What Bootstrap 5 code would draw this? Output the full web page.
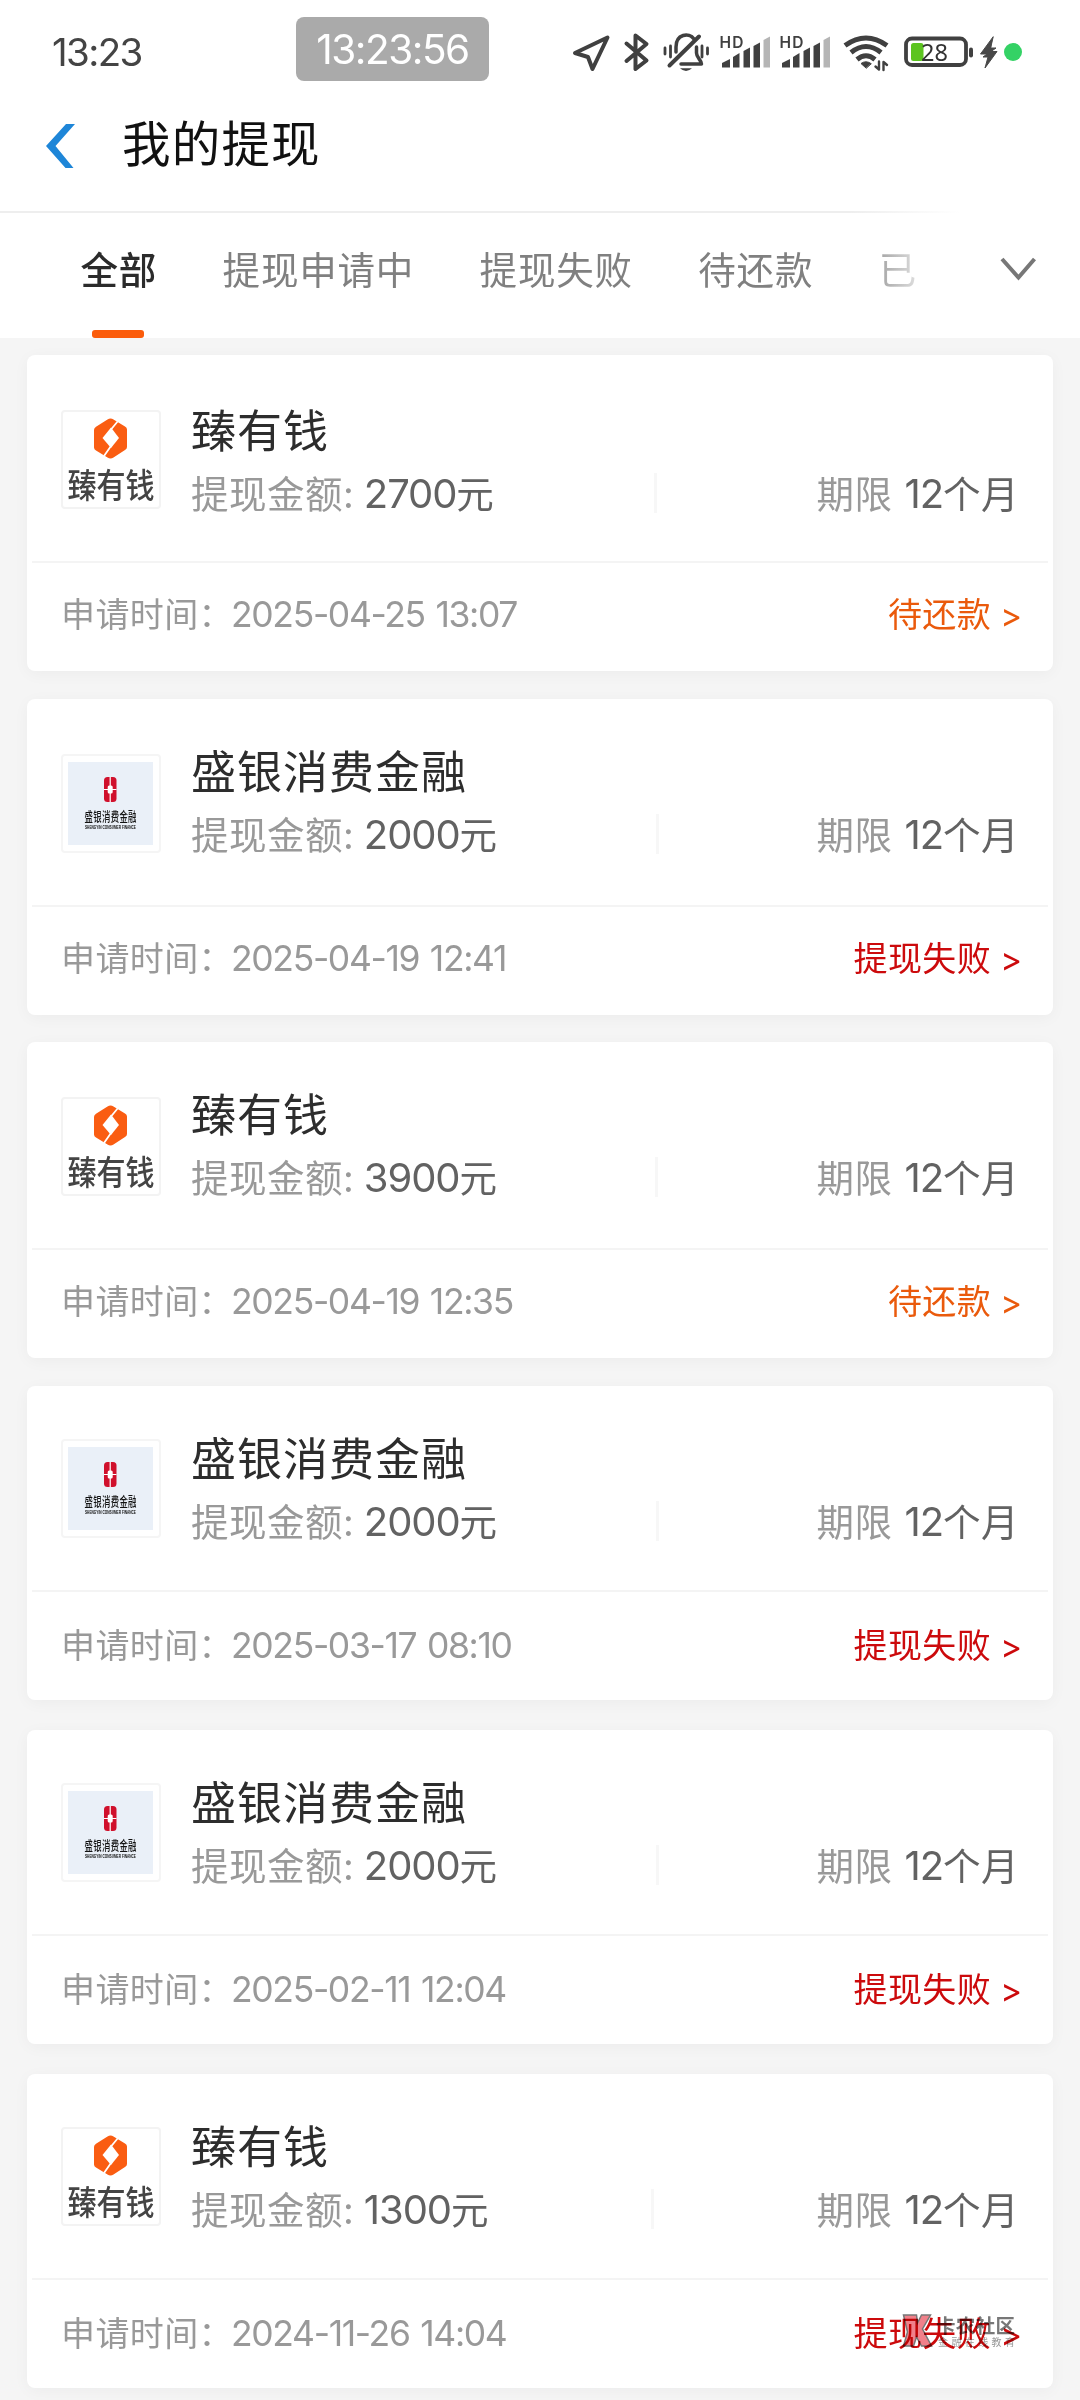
<!DOCTYPE html>
<html lang="zh-CN">
<head>
<meta charset="utf-8">
<meta name="viewport" content="width=device-width, initial-scale=1">
<title>我的提现</title>
<link href="https://cdn.jsdelivr.net/npm/bootstrap@5.3.0/dist/css/bootstrap.min.css" rel="stylesheet">
<style>
  body { font-family: Inter, "Noto Sans CJK SC", sans-serif; background: #f5f5f5; color: #333; }
  .app { width: 1080px; height: 2400px; overflow: hidden; }
  .statusbar { height: 98px; }
  .clock { font-size: 38.5px; line-height: 40px; letter-spacing: -1.6px; color: #444; padding: 32px 0 0 52px; }
  .timer { left: 296px; top: 17px; width: 193px; height: 64px; border-radius: 8px; background: #aaa; color: #fff; font-size: 40.5px; line-height: 65px; letter-spacing: -1.5px; }
  .sysicons { left: 565px; top: 25px; }
  .titlebar { height: 113px; padding-left: 44px; }
  .titlebar h1 { font-size: 48.5px; line-height: 60px; letter-spacing: 1.2px; color: #111; margin-left: 46px; padding-top: 17px; }
  .back-ico { margin-top: 26px; }
  .tabbar { height: 127px; }
  .tabline { height: 2px; background: linear-gradient(90deg, #eee 0, #eee 850px, #fff 960px); }
  .tabs-strip { gap: 65.5px; padding-left: 80.500px; width: 950px; font-size: 37.5px; line-height: 48px; letter-spacing: .8px; color: #808080; padding-top: 34px; height: 125px; }
  .tabs-strip .current { color: #2b2b2b; font-weight: 500; }
  .tabs-strip .current::after { content: ""; position: absolute; left: 11.5px; top: 83px; width: 52px; height: 8px; border-radius: 3px; background: #fb5c0b; }
  .tabs-strip .faded { background: linear-gradient(90deg, #a5a5a5, #dedede); -webkit-background-clip: text; color: transparent; }
  .expand { margin: 44px 43px 0 0; }
  .records { padding: 17px 27px 0 27px; }
  .record { border: 0; border-radius: 8px; height: 316px; margin-bottom: 28px; background: #fff; box-shadow: 0 3px 16px rgba(0,0,0,.04); }
  .record.b27 { margin-bottom: 27px; }
  .rec-top { height: 208px; margin: 0 5px; padding: 55px 29px 0 29px; border-bottom: 2px solid #f4f4f4; }
  .short { height: 314px; margin-bottom: 30px; }
  .short .rec-top { height: 206px; padding-top: 53px; }
  .rec-logo { width: 100px; height: 99px; flex: none; }
  .rec-main { margin: -2px 0 0 30px; }
  .first .rec-main { margin-top: 1px; }
  .short .rec-main { margin-top: 0; }
  .rec-name { font-size: 45px; line-height: 46px; letter-spacing: 1px; margin-top: -2px; color: #2d2d2d; white-space: nowrap; }
  .rec-line { font-size: 37.5px; line-height: 40px; margin-top: 19px; letter-spacing: .5px; word-spacing: -1.5px; color: #999; white-space: nowrap; }
  .rec-line b { font-weight: 400; color: #626262; }
  .num { font-size: 40px; letter-spacing: -1.1px; }
  .term { word-spacing: 1px; }
  .sep { width: 3px; height: 40px; background: #f7f7f7; margin-top: -1px; }
  .rec-foot { font-size: 34px; line-height: 36px; padding: 34px 32px 0 34px; color: #999; letter-spacing: .4px; white-space: nowrap; }
  .short .rec-foot { padding-top: 36px; }
  .when { font-size: 35.5px; letter-spacing: -1.35px; word-spacing: 2px; margin-left: -2px; }
  .pay { color: #ea5a0c; }
  .fail { color: #cc0a0c; }
  .arrow { font-size: 33px; margin-left: 9px; letter-spacing: -1px; }
  .stamp { right: 35px; bottom: 36px; mix-blend-mode: multiply; }
  svg { display: block; }
</style>
</head>
<body>
<svg width="0" height="0" class="position-absolute">
  <defs>
    <symbol id="logo-zyq" viewBox="0 0 100 99">
      <rect x="1" y="1" width="98" height="97" rx="3" fill="#fff" stroke="#f3f3f3" stroke-width="2"/>
      <path d="M49.500 8.500q1.500 0 3 1L64 16.500q2 1.200 2 3V37q0 2-2 3L52.500 47.500q-3 1.800-6 0L35 40.500q-2-1.200-2-3V20q0-2 2-3.200L46.500 9.500q1.500-1 3-1z" fill="#fa5d12"/>
      <path d="M50 17.500L58 28 50 38 41.500 28z" fill="#fff"/>
      <path d="M57 11L50 19.500M50 36L43 46" stroke="#fff" stroke-width="1.800"/>
      <text transform="translate(6.500 88) scale(1 1.180)" font-family="Noto Sans CJK SC, sans-serif" font-size="28.500" font-weight="500" textLength="87" lengthAdjust="spacingAndGlyphs" fill="#444">臻有钱</text>
    </symbol>
    <symbol id="logo-sy" viewBox="0 0 100 99">
      <rect x="1" y="1" width="98" height="97" rx="3" fill="#fff" stroke="#f5f5f5" stroke-width="2"/>
      <rect x="7" y="8" width="85" height="83" fill="#eaf0f8"/>
      <rect x="43" y="23" width="12.500" height="25" rx="3.500" fill="#d0102c"/>
      <path d="M49.200 23v25M43 35.500h12.500" stroke="#fff" stroke-width="1.200"/>
      <rect x="46.700" y="31.500" width="5" height="8" rx="1.500" fill="#fff"/>
      <text transform="translate(23.500 67) scale(1 1.550)" font-family="Noto Sans CJK SC, sans-serif" font-size="8.400" font-weight="500" textLength="52" fill="#111">盛银消费金融</text>
      <text x="24" y="75" font-family="Liberation Sans, sans-serif" font-size="4.500" font-weight="700" textLength="51" lengthAdjust="spacingAndGlyphs" fill="#111">SHENGYIN CONSUMER FINANCE</text>
    </symbol>
  </defs>
</svg>

<main class="app position-relative">
  <header class="bg-white">
    <div class="statusbar position-relative">
      <div class="clock">13:23</div>
      <div class="timer position-absolute text-center">13:23:56</div>
      <svg class="sysicons position-absolute" width="465" height="55" viewBox="565 25 465 55" fill="none" stroke="#404040" stroke-linecap="round" stroke-linejoin="round">
        <path d="M575 53L607.500 37.500 592.500 69 588 57z" stroke-width="4"/>
        <path d="M626.500 43.500L646.500 60.500 635.500 69V35.500L646.500 44 626.500 61" stroke-width="4"/>
        <g stroke-width="3.500">
          <path d="M676 52V47c0-13 13-15 18-8M696.500 47v6c0 5 5 7 5 11H681"/>
          <path d="M669.500 65.500L699 36.500" stroke-width="4"/>
          <path d="M665 48v6M670.500 46v11M702 46v11M707.500 48v6" stroke-width="2.800"/>
          <path d="M680 68.200h12q-6 5.500-12 0z" fill="#404040" stroke="none"/>
        </g>
        <g id="sig" stroke="none" fill="#404040">
          <text x="719.500" y="48" font-family="Inter, sans-serif" font-size="15.500" font-weight="600" textLength="24">HD</text>
          <path d="M722 63l8-4v8.500h-8zM733 57l6.500-4v14.500H733zM743.500 51l6.500-3.500v20h-6.500zM753.500 46l6.500-3.500v25h-6.500z"/>
          <path d="M763.500 40l6.500-3.500v31h-6.500z" fill="#b5b5b5"/>
        </g>
        <use href="#sig" x="60"/>
        <path d="M845 45.500q21-15 42 0M851 52.500q15-12 30 0M857 59.500q9-7.500 18 0" stroke-width="5" stroke-linecap="butt"/>
        <path d="M866 68l-5-4.500q5-3.500 10 0z" fill="#404040" stroke-width="1"/>
        <path d="M879 61.500v8l-3.500-3M883.500 70v-8l3.500 3" stroke-width="2.400"/>
        <rect x="906" y="38.500" width="60" height="26.500" rx="6" stroke-width="3.800"/>
        <rect x="911" y="43" width="12.500" height="18" rx="2.500" fill="#5cc41f" stroke="none"/>
        <path d="M971 49.500v6" stroke-width="4"/>
        <text x="921" y="61" font-family="Noto Sans, sans-serif" font-size="23.500" textLength="27" fill="#333" stroke="none">28</text>
        <path d="M993 37L980.500 54h6.500l-4 3h5l-3 11 12-16.500h-6l5-3.500h-5z" fill="#484848" stroke="#484848" stroke-width="1"/>
        <circle cx="1013" cy="52" r="9" fill="#34d265" stroke="none"/>
      </svg>
    </div>
    <div class="titlebar d-flex align-items-start">
      <svg class="back-ico" width="32" height="44" viewBox="0 0 32 44"><path d="M22 0h9L11.500 22 29.500 44H21.500L2 22z" fill="#1e86d8"/></svg>
      <h1 class="mb-0 fw-normal">我的提现</h1>
    </div>
    <nav class="tabbar">
      <div class="tabline"></div>
      <div class="d-flex justify-content-between align-items-start">
        <div class="tabs-strip d-flex text-nowrap overflow-hidden">
          <span class="current position-relative">全部</span><span>提现申请中</span><span>提现失败</span><span>待还款</span><span><span class="faded">已</span></span>
        </div>
        <svg class="expand" width="38" height="26" viewBox="0 0 38 26"><path d="M3 2L19.500 20.500 35.500 2" fill="none" stroke="#777" stroke-width="4"/></svg>
      </div>
    </nav>
  </header>

  <section class="records">
    <article class="card record first">
      <div class="rec-top d-flex">
        <svg class="rec-logo"><use href="#logo-zyq"/></svg>
        <div class="rec-main flex-grow-1">
          <div class="rec-name">臻有钱</div>
          <div class="rec-line d-flex justify-content-between"><span>提现金额: <b><span class="num">2700</span>元</b></span><i class="sep"></i><span class="term">期限 <b><span class="num">12</span>个月</b></span></div>
        </div>
      </div>
      <div class="rec-foot d-flex justify-content-between"><span>申请时间：<span class="when">2025-04-25 13:07</span></span><span class="pay">待还款<span class="arrow">&gt;</span></span></div>
    </article>

    <article class="card record b27">
      <div class="rec-top d-flex">
        <svg class="rec-logo"><use href="#logo-sy"/></svg>
        <div class="rec-main flex-grow-1">
          <div class="rec-name">盛银消费金融</div>
          <div class="rec-line d-flex justify-content-between"><span>提现金额: <b><span class="num">2000</span>元</b></span><i class="sep"></i><span class="term">期限 <b><span class="num">12</span>个月</b></span></div>
        </div>
      </div>
      <div class="rec-foot d-flex justify-content-between"><span>申请时间：<span class="when">2025-04-19 12:41</span></span><span class="fail">提现失败<span class="arrow">&gt;</span></span></div>
    </article>

    <article class="card record">
      <div class="rec-top d-flex">
        <svg class="rec-logo"><use href="#logo-zyq"/></svg>
        <div class="rec-main flex-grow-1">
          <div class="rec-name">臻有钱</div>
          <div class="rec-line d-flex justify-content-between"><span>提现金额: <b><span class="num">3900</span>元</b></span><i class="sep"></i><span class="term">期限 <b><span class="num">12</span>个月</b></span></div>
        </div>
      </div>
      <div class="rec-foot d-flex justify-content-between"><span>申请时间：<span class="when">2025-04-19 12:35</span></span><span class="pay">待还款<span class="arrow">&gt;</span></span></div>
    </article>

    <article class="card record short">
      <div class="rec-top d-flex">
        <svg class="rec-logo"><use href="#logo-sy"/></svg>
        <div class="rec-main flex-grow-1">
          <div class="rec-name">盛银消费金融</div>
          <div class="rec-line d-flex justify-content-between"><span>提现金额: <b><span class="num">2000</span>元</b></span><i class="sep"></i><span class="term">期限 <b><span class="num">12</span>个月</b></span></div>
        </div>
      </div>
      <div class="rec-foot d-flex justify-content-between"><span>申请时间：<span class="when">2025-03-17 08:10</span></span><span class="fail">提现失败<span class="arrow">&gt;</span></span></div>
    </article>

    <article class="card record short">
      <div class="rec-top d-flex">
        <svg class="rec-logo"><use href="#logo-sy"/></svg>
        <div class="rec-main flex-grow-1">
          <div class="rec-name">盛银消费金融</div>
          <div class="rec-line d-flex justify-content-between"><span>提现金额: <b><span class="num">2000</span>元</b></span><i class="sep"></i><span class="term">期限 <b><span class="num">12</span>个月</b></span></div>
        </div>
      </div>
      <div class="rec-foot d-flex justify-content-between"><span>申请时间：<span class="when">2025-02-11 12:04</span></span><span class="fail">提现失败<span class="arrow">&gt;</span></span></div>
    </article>

    <article class="card record short position-relative">
      <div class="rec-top d-flex">
        <svg class="rec-logo"><use href="#logo-zyq"/></svg>
        <div class="rec-main flex-grow-1">
          <div class="rec-name">臻有钱</div>
          <div class="rec-line d-flex justify-content-between"><span>提现金额: <b><span class="num">1300</span>元</b></span><i class="sep"></i><span class="term">期限 <b><span class="num">12</span>个月</b></span></div>
        </div>
      </div>
      <div class="rec-foot d-flex justify-content-between"><span>申请时间：<span class="when">2024-11-26 14:04</span></span><span class="fail">提现失败<span class="arrow">&gt;</span></span></div>
      <svg class="stamp position-absolute" width="116" height="40" viewBox="904 2311 116 40">
        <path d="M905.500 2314h13l1 8 4-8h9l-8 14 9 17h-10l-5-9-3 9h-10l4-14z" fill="#f0808a" stroke="#777" stroke-width="1.500"/>
        <text x="938" y="2331.500" font-family="Noto Sans CJK SC, sans-serif" font-size="19.500" font-weight="700" textLength="79" fill="#777">卡农社区</text>
        <text x="940" y="2345" font-family="Noto Sans CJK SC, sans-serif" font-size="10" textLength="77" fill="#999">金融在线教育</text>
      </svg>
    </article>
  </section>
</main>
<script src="https://cdn.jsdelivr.net/npm/bootstrap@5.3.0/dist/js/bootstrap.bundle.min.js"></script>
</body>
</html>
